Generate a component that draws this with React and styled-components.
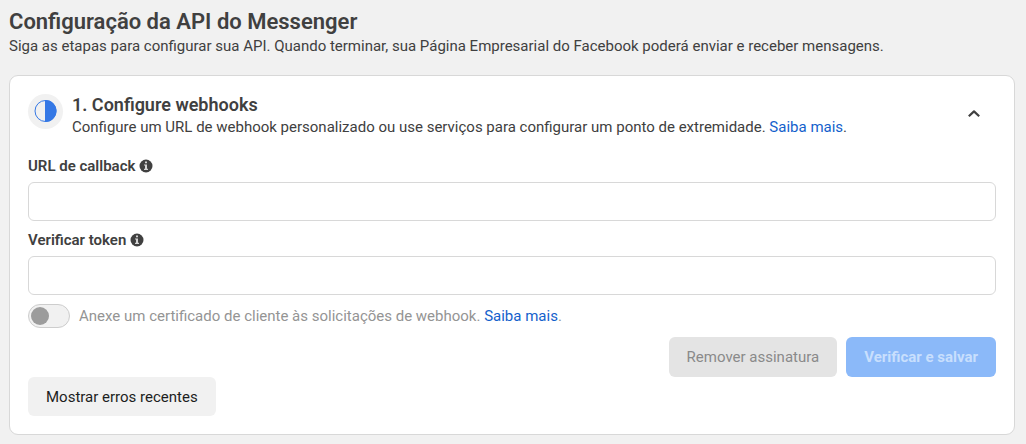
import React, { useState } from 'react';
import styled, { createGlobalStyle } from 'styled-components';

const GlobalStyle = createGlobalStyle`
  * {
    box-sizing: border-box;
  }

  body {
    margin: 0;
    background-color: #f1f1f1;
    color: #404040;
    font-family: Roboto, sans-serif;
    font-size: 15px;
    line-height: 20px;
  }
`;

const Page = styled.main`
  min-height: 100vh;
  padding: 8px 11px 9px 9px;
`;

const PageTitle = styled.h1`
  margin: 0;
  font-size: 22px;
  font-weight: 600;
  line-height: 28px;
`;

const Text = styled.p`
  margin: 0;
`;

const Card = styled.section`
  margin-top: 19px;
  padding: 18px;
  background-color: #fff;
  border: 1px solid #d8d8d8;
  border-radius: 9px;
`;

const CardHeader = styled.header`
  display: flex;
  align-items: flex-start;
  gap: 9px;
  margin-bottom: 18px;
`;

const StatusBadge = styled.span`
  display: flex;
  align-items: center;
  justify-content: center;
  flex: none;
  width: 35px;
  height: 35px;
  background-color: #f1f1f1;
  border-radius: 50%;
`;

const HeaderText = styled.div`
  flex: 1;
`;

const CardTitle = styled.h2`
  margin: 0 0 1px;
  font-size: 18px;
  font-weight: 600;
  line-height: 22px;
`;

const Link = styled.a`
  color: #1461cc;
  text-decoration: none;
`;

const CollapseButton = styled.button`
  display: flex;
  align-items: center;
  justify-content: center;
  width: 44px;
  height: 40px;
  padding: 0;
  border: none;
  background: none;
  color: #404040;
  cursor: pointer;
`;

const Field = styled.div`
  margin-bottom: 8px;
`;

const LabelRow = styled.div`
  display: flex;
  align-items: center;
  gap: 4px;
  height: 22px;
  margin-bottom: 5px;
`;

const Label = styled.label`
  font-weight: 600;
`;

const Input = styled.input`
  display: block;
  width: 100%;
  height: 39px;
  padding: 0 12px;
  border: 1px solid #d8d8d8;
  border-radius: 6px;
  background-color: #fff;
  font: inherit;
  color: inherit;
`;

const ToggleRow = styled.div`
  display: flex;
  align-items: center;
  gap: 9px;
  padding-top: 1px;
  color: #949494;
`;

const Toggle = styled.input`
  appearance: none;
  display: flex;
  align-items: center;
  width: 42px;
  height: 24px;
  margin: 0;
  padding: 0 2px;
  border: 1px solid #cdcdcd;
  border-radius: 12px;
  background-color: #f1f1f1;

  &::before {
    content: '';
    width: 18px;
    height: 18px;
    border-radius: 50%;
    background-color: #9c9c9c;
  }
`;

const Actions = styled.div`
  display: flex;
  justify-content: flex-end;
  gap: 9px;
  margin-top: 9px;
`;

const variants = {
  secondary: 'background-color: #f1f1f1; color: #1c1e21;',
  muted: 'background-color: #e4e4e4; color: #8a8a8a;',
  primary: 'background-color: #8bb9f9; color: #c8dffd; font-weight: 700;',
};

const Button = styled.button`
  height: ${({ $variant }) => ($variant === 'secondary' ? '39px' : '40px')};
  padding: 0 18px;
  border: none;
  border-radius: 6px;
  font: inherit;
  ${({ $variant }) => variants[$variant]}
`;

const HalfCircleIcon = () => (
  <svg width="23" height="23" viewBox="0 0 23 23" aria-hidden="true">
    <circle cx="11.5" cy="11" r="10.5" fill="none" stroke="#3578e5" strokeWidth="1" />
    <path d="M11 0h.5a11 11 0 0 1 0 22H11z" fill="#3578e5" />
  </svg>
);

const ChevronUpIcon = () => (
  <svg width="14" height="14" viewBox="0 0 14 14" aria-hidden="true">
    <path d="M1.8 9.2 7 4.4 12.2 9.2" fill="none" stroke="currentColor" strokeWidth="2.2" strokeLinejoin="round" />
  </svg>
);

const InfoIcon = () => (
  <svg width="14" height="14" viewBox="0 0 14 14" aria-hidden="true">
    <circle cx="7" cy="7" r="6.5" fill="#404040" />
    <path d="M6 2.5h2v1.8H6zM5 5.4h3v4.4h1v1.2H5V9.8h1V6.6H5z" fill="#d4d4d4" />
  </svg>
);

const TextField = ({ id, label }) => {
  const [value, setValue] = useState('');

  return (
    <Field>
      <LabelRow>
        <Label htmlFor={id}>{label}</Label>
        <InfoIcon />
      </LabelRow>
      <Input id={id} type="text" value={value} onChange={(e) => setValue(e.target.value)} />
    </Field>
  );
};

const App = () => (
  <>
    <GlobalStyle />
    <Page>
      <PageTitle>Configuração da API do Messenger</PageTitle>
      <Text>
        Siga as etapas para configurar sua API. Quando terminar, sua Página Empresarial do Facebook
        poderá enviar e receber mensagens.
      </Text>

      <Card>
        <CardHeader>
          <StatusBadge>
            <HalfCircleIcon />
          </StatusBadge>
          <HeaderText>
            <CardTitle>1. Configure webhooks</CardTitle>
            <Text>
              Configure um URL de webhook personalizado ou use serviços para configurar um ponto de
              extremidade. <Link href="#webhooks">Saiba mais</Link>.
            </Text>
          </HeaderText>
          <CollapseButton type="button" aria-label="Recolher">
            <ChevronUpIcon />
          </CollapseButton>
        </CardHeader>

        <TextField id="callback-url" label="URL de callback" />
        <TextField id="verify-token" label="Verificar token" />

        <ToggleRow>
          <Toggle type="checkbox" role="switch" id="client-certificate" disabled />
          <Text>
            <label htmlFor="client-certificate">
              Anexe um certificado de cliente às solicitações de webhook.
            </label>{' '}
            <Link href="#certificate">Saiba mais</Link>.
          </Text>
        </ToggleRow>

        <Actions>
          <Button type="button" $variant="muted" disabled>Remover assinatura</Button>
          <Button type="button" $variant="primary" disabled>Verificar e salvar</Button>
        </Actions>
        <Button type="button" $variant="secondary">Mostrar erros recentes</Button>
      </Card>
    </Page>
  </>
);

export default App;
